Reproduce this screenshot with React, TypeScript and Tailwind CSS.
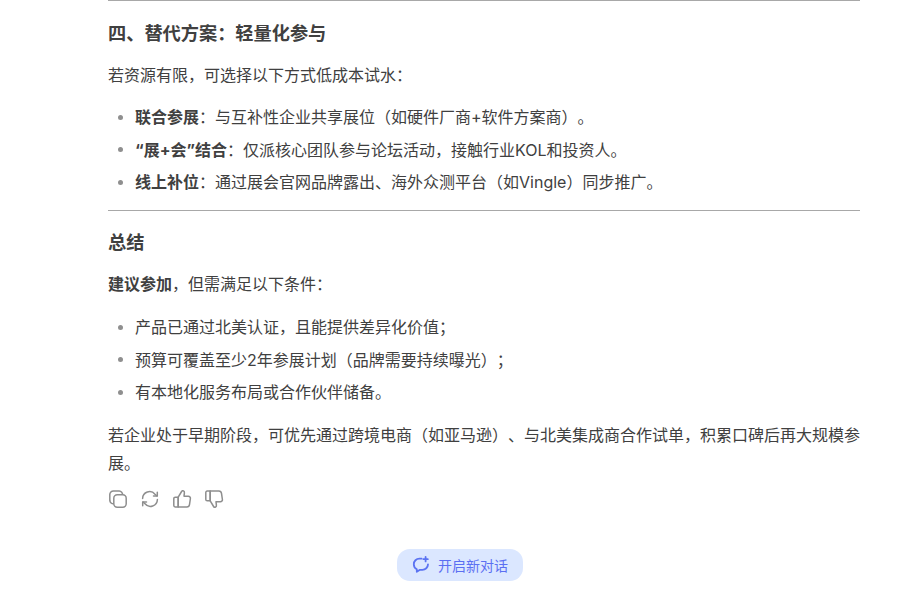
const bodyFont = '[font-family:"Inter","Noto_Sans_CJK_SC",sans-serif]';

function Bullet({ children }: { children: React.ReactNode }) {
  return (
    <li className="flex h-[32.5px] items-center">
      <span className="ml-[10px] mr-[12px] h-[5px] w-[5px] rounded-full bg-[#8f8f8f]" />
      <span>{children}</span>
    </li>
  );
}

function CopyIcon() {
  return (
    <svg width="20" height="20" viewBox="0 0 20 20" fill="none" stroke="#8e8e8e" strokeWidth="1.5">
      <rect x="5.8" y="5.8" width="12.4" height="12.4" rx="3.4" />
      <path d="M14.6 5.8A3.6 3.6 0 0 0 11.2 2H5.4A3.6 3.6 0 0 0 1.8 5.6v5.8a3.6 3.6 0 0 0 4 3.4" />
    </svg>
  );
}

function RefreshIcon() {
  return (
    <svg width="20" height="20" viewBox="0 0 20 20" fill="none" stroke="#8e8e8e" strokeWidth="1.5" strokeLinecap="round" strokeLinejoin="round">
      <path d="M2.6 9.5A7 7 0 0 1 15 5.2l2 1.8" />
      <path d="M17.3 3.2V7h-3.8" />
      <path d="M17.4 10.5A7 7 0 0 1 5 14.8L3 13" />
      <path d="M2.7 16.8V13h3.8" />
    </svg>
  );
}

function ThumbUpIcon() {
  return (
    <svg width="20" height="20" viewBox="0 0 20 20" fill="none" stroke="#8e8e8e" strokeWidth="1.5" strokeLinejoin="round">
      <path d="M6.2 8.2h-3a1.4 1.4 0 0 0-1.4 1.4v7a1.4 1.4 0 0 0 1.4 1.4h3z" />
      <path d="M6.2 8.2l3.4-5.7c.4-.7 1.2-1 1.9-.6.7.4 1 1.2.9 2L12 7.2h4.4c1.3 0 2.2 1.1 2 2.3l-.9 6.2a2.7 2.7 0 0 1-2.7 2.3H6.2z" />
    </svg>
  );
}

function ThumbDownIcon() {
  return (
    <svg width="20" height="20" viewBox="0 0 20 20" fill="none" stroke="#8e8e8e" strokeWidth="1.5" strokeLinejoin="round">
      <path d="M6.2 11.8h-3a1.4 1.4 0 0 1-1.4-1.4v-7A1.4 1.4 0 0 1 3.2 2h3z" />
      <path d="M6.2 11.8l3.4 5.7c.4.7 1.2 1 1.9.6.7-.4 1-1.2.9-2l-.4-3.3h4.4c1.3 0 2.2-1.1 2-2.3l-.9-6.2A2.7 2.7 0 0 0 14.8 2H6.2z" />
    </svg>
  );
}

function NewChatIcon() {
  return (
    <svg width="18" height="18" viewBox="0 0 18 18" fill="none" stroke="#5b73f2" strokeWidth="1.8" strokeLinecap="round" strokeLinejoin="round">
      <path d="M9.6 2.6H7.4A5.6 5.6 0 0 0 1.8 8.2a5.6 5.6 0 0 0 3 5v2.6l3.2-2h2.4a5.6 5.6 0 0 0 5.6-5.4" />
      <path d="M13.6 1v4.4M11.4 3.2h4.4" />
    </svg>
  );
}

export default function App() {
  return (
    <div className={`relative h-[592px] w-[920px] overflow-hidden bg-white text-[16px] text-[#404040] [text-spacing-trim:space-all] ${bodyFont}`}>
      <div className="ml-[108px] w-[752px]">
        <hr className="border-t border-[#a8a8a8]" />
        <h3 className="mt-[18px] text-[18.2px] leading-[28px] font-bold">四、替代方案：轻量化参与</h3>
        <p className="mt-[14px] leading-[28px]">若资源有限，可选择以下方式低成本试水：</p>
        <ul className="mt-[12px]">
          <Bullet><b>联合参展</b>：与互补性企业共享展位（如硬件厂商+软件方案商）。</Bullet>
          <Bullet><b>“展+会”结合</b>：仅派核心团队参与论坛活动，接触行业KOL和投资人。</Bullet>
          <Bullet><b>线上补位</b>：通过展会官网品牌露出、海外众测平台（如Vingle）同步推广。</Bullet>
        </ul>
        <hr className="mt-[11.5px] border-t border-[#a8a8a8]" />
        <h3 className="mt-[17px] text-[18.2px] leading-[28px] font-bold">总结</h3>
        <p className="mt-[14px] leading-[28px]"><b>建议参加</b>，但需满足以下条件：</p>
        <ul className="mt-[13px]">
          <Bullet>产品已通过北美认证，且能提供差异化价值；</Bullet>
          <Bullet>预算可覆盖至少2年参展计划（品牌需要持续曝光）；</Bullet>
          <Bullet>有本地化服务布局或合作伙伴储备。</Bullet>
        </ul>
        <p className="mt-[12.5px] leading-[28px]">若企业处于早期阶段，可优先通过跨境电商（如亚马逊）、与北美集成商合作试单，积累口碑后再大规模参展。</p>
        <div className="mt-[12px] flex gap-[12px]">
          <CopyIcon />
          <RefreshIcon />
          <ThumbUpIcon />
          <ThumbDownIcon />
        </div>
      </div>
      <button className="absolute top-[549px] left-[397px] flex h-[32px] w-[126px] items-center justify-center gap-[8px] rounded-[13px] bg-[#dbe7ff] text-[14px] text-[#5b6ff2]">
        <NewChatIcon />
        开启新对话
      </button>
    </div>
  );
}
